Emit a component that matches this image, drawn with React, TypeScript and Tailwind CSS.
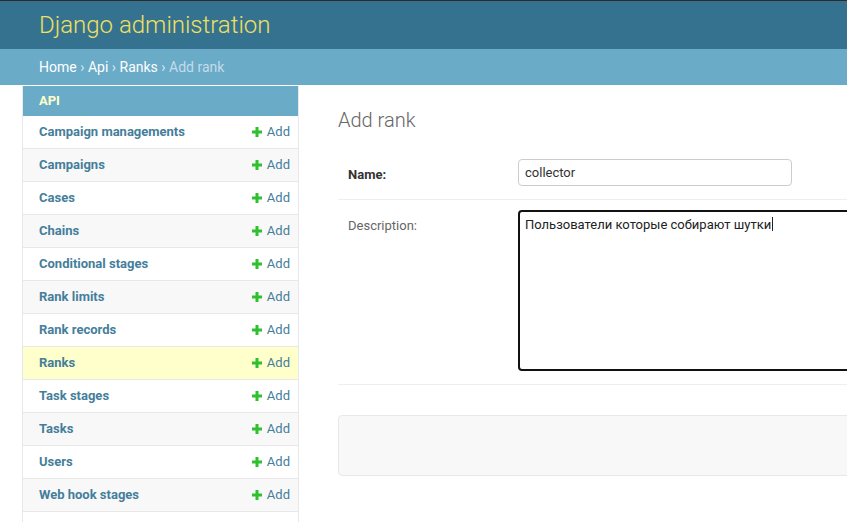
const models = [
  'Campaign managements',
  'Campaigns',
  'Cases',
  'Chains',
  'Conditional stages',
  'Rank limits',
  'Rank records',
  'Ranks',
  'Task stages',
  'Tasks',
  'Users',
  'Web hook stages',
];

function PlusIcon() {
  return (
    <svg width="10" height="10" viewBox="0 0 10 10" className="shrink-0">
      <path d="M3.5 0h3v3.5H10v3H6.5V10h-3V6.5H0v-3h3.5z" fill="#2fc02f" />
    </svg>
  );
}

function ModelRow({ name, index }: { name: string; index: number }) {
  const current = name === 'Ranks';
  const bg = current ? 'bg-[#ffffcc]' : index % 2 === 0 ? 'bg-white' : 'bg-[#f8f8f8]';
  return (
    <div className={`flex h-[33px] items-center justify-between border-b border-[#e8e8e8] pl-4 pr-2 ${bg}`}>
      <span className="text-[13px] font-bold text-[#447e9b]">{name}</span>
      <span className="flex items-center gap-[5px] text-[13px] text-[#447e9b]">
        <PlusIcon />
        Add
      </span>
    </div>
  );
}

export default function App() {
  return (
    <div className="h-[522px] w-[847px] overflow-hidden bg-white font-['Roboto',sans-serif] text-[13px] text-[#333]">
      <header className="flex h-[49px] items-center border-t border-[#2b2b2b] bg-[#35728f] px-[39px]">
        <h1 className="text-[24px] font-light text-[#f0e060]">Django administration</h1>
      </header>
      <nav className="flex h-[36px] items-center bg-[#6aabc8] px-[39px] text-[14px] text-white">
        <span>Home</span>
        <span className="mx-[3.5px] text-[#d7e9f2]">›</span>
        <span>Api</span>
        <span className="mx-[3.5px] text-[#d7e9f2]">›</span>
        <span>Ranks</span>
        <span className="mx-[3.5px] text-[#d7e9f2]">›</span>
        <span className="text-[#c4dce8]">Add rank</span>
      </nav>
      <div className="flex pt-px">
        <aside className="ml-[22px] h-[480px] w-[277px] shrink-0 border-x border-[#e8e8e8]">
          <div className="flex h-[30px] items-center bg-[#6aabc8] pl-4 text-[13px] font-bold text-[#ffffcc]">API</div>
          {models.map((m, i) => (
            <ModelRow key={m} name={m} index={i} />
          ))}
        </aside>
        <main className="ml-[39px] w-[560px] shrink-0">
          <h2 className="mt-[19px] text-[20px] font-light text-[#666]">Add rank</h2>
          <div className="mt-[13px] flex h-[52px] items-start border-b border-[#eee] pl-[10px] pt-[11px]">
            <label className="mt-[6px] w-[170px] shrink-0 text-[13px] font-bold text-[#333]">Name:</label>
            <div className="flex h-[27px] w-[274px] shrink-0 items-center rounded-[4px] border border-[#ccc] px-[6px] text-[13px] text-[#333]">
              collector
            </div>
          </div>
          <div className="flex h-[185px] items-start border-b border-[#eee] pl-[10px] pt-[10px]">
            <label className="mt-[6px] w-[170px] shrink-0 text-[13px] text-[#666]">Description:</label>
            <div className="h-[161px] w-[400px] shrink-0 rounded-[4px] border-2 border-[#111] px-[5px] pt-[3px] text-[13px] text-[#222]">
              Пользователи которые собирают шутки
              <span className="ml-px inline-block h-[14px] w-px translate-y-[2px] bg-[#222]" />
            </div>
          </div>
          <div className="mt-[30px] h-[61px] rounded-[4px] border border-[#e8e8e8] bg-[#f8f8f8]" />
        </main>
      </div>
    </div>
  );
}
